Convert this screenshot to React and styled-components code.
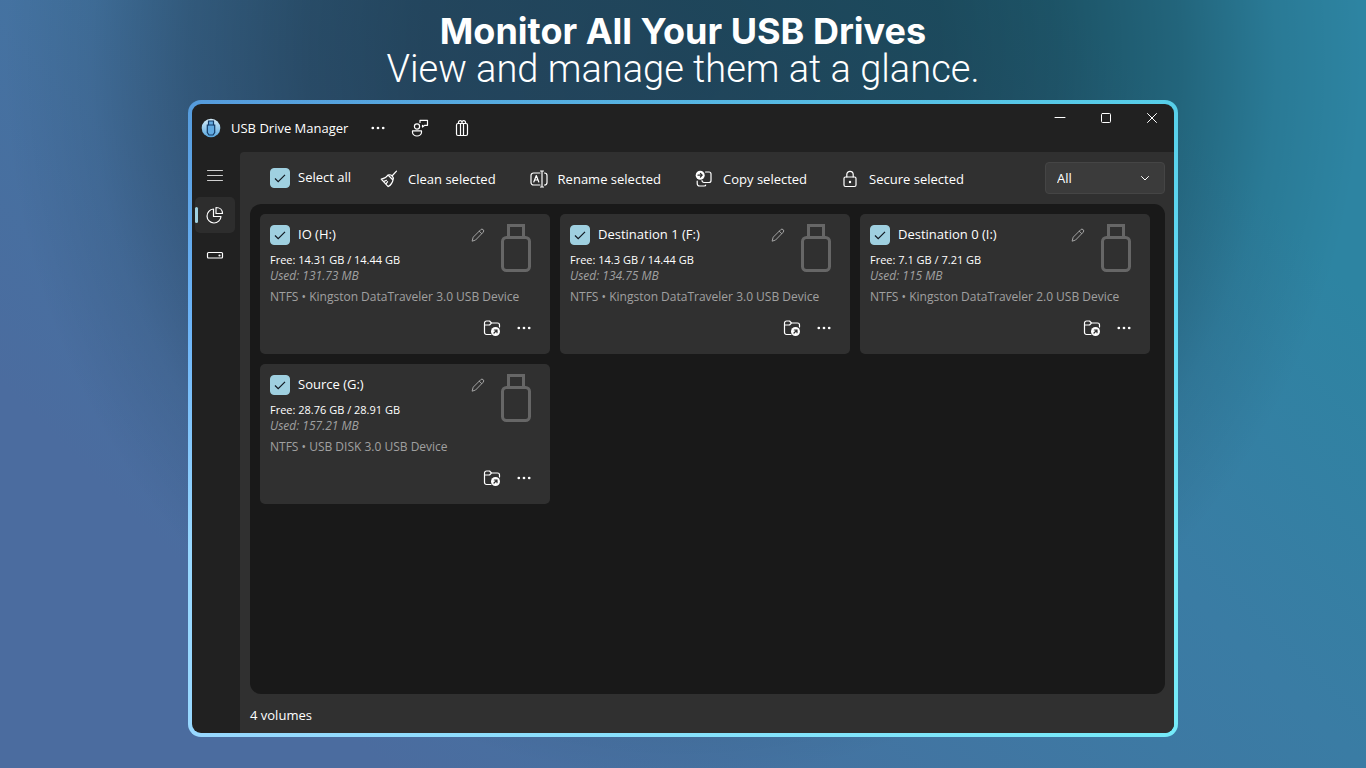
import React, { useState } from "react";
import styled, { createGlobalStyle } from "styled-components";

const Global = createGlobalStyle`
  *, *::before, *::after { box-sizing: border-box; }
  body { margin: 0; background: #4b6c9f; font-family: "Open Sans", "Noto Sans", sans-serif; font-size: 13px; color: #fff; }
  button, select, input { font: inherit; color: inherit; margin: 0; }
  h1, h2, p { margin: 0; font-weight: inherit; font-size: inherit; }
  svg { display: block; flex: none; }
`;

const Page = styled.div`
  min-height: 100vh;
  display: flex;
  flex-direction: column;
  padding: 0 188px 31px;
  background:
    radial-gradient(ellipse 680px 720px at 50% 60px, rgba(0, 0, 0, 0.45) 0%, rgba(0, 0, 0, 0.43) 38%, rgba(0, 0, 0, 0.37) 55%, rgba(0, 0, 0, 0.24) 73%, rgba(0, 0, 0, 0.08) 87%, rgba(0, 0, 0, 0) 100%),
    linear-gradient(45deg, #4b6c9f 18%, #3a7ca4 64%, #2d84a2 86%);
`;

const Hero = styled.header`
  height: 100px;
  padding-top: 12px;
  text-align: center;
  line-height: 38px;
`;
const HeroTitle = styled.h1`
  font-family: Inter, sans-serif;
  font-size: 36px;
  font-weight: 700;
`;
const HeroSub = styled.p`
  font-family: Roboto, sans-serif;
  font-size: 38px;
  font-weight: 300;
`;

const Frame = styled.main`
  flex: 1;
  display: flex;
  padding: 4px;
  border-radius: 13px;
  background:
    linear-gradient(90deg, rgba(80, 240, 240, 0), rgba(88, 250, 244, 0.55)),
    linear-gradient(180deg, #559bdc, #6cb4f8 35%, #98d8ff 70%);
`;
const Window = styled.div`
  flex: 1;
  display: flex;
  flex-direction: column;
  border-radius: 9px;
  overflow: hidden;
  background: #212121;
`;

const TitleBar = styled.div`
  height: 48px;
  display: flex;
  align-items: center;
  padding: 0 0 1px 9px;
`;
const AppName = styled.span`
  margin: 0 5px 0 10px;
  width: 126px;
  white-space: nowrap;
`;
const IconButton = styled.button`
  display: flex;
  align-items: center;
  justify-content: center;
  width: ${(p) => p.$w || 32}px;
  height: ${(p) => p.$h || 32}px;
  padding: 0;
  border: 0;
  background: none;
`;
const TitleTools = styled.div`
  display: flex;
  gap: 10px;
`;
const WindowButtons = styled.div`
  margin-left: auto;
  align-self: flex-start;
  display: flex;
`;

const Body = styled.div`
  flex: 1;
  display: flex;
`;
const Sidebar = styled.nav`
  width: 48px;
  display: flex;
  flex-direction: column;
  gap: 4px;
  padding: 5px 0 0 3px;
`;
const NavButton = styled.button`
  width: 40px;
  height: 36px;
  display: flex;
  align-items: center;
  padding: 0;
  border: 0;
  border-radius: 5px;
  background: ${(p) => (p.$active ? "#2d2d2d" : "none")};
  &::before {
    content: "";
    width: 3px;
    height: 16px;
    margin-right: 8px;
    border-radius: 2px;
    background: ${(p) => (p.$active ? "#9fd0e0" : "transparent")};
  }
`;

const Content = styled.section`
  flex: 1;
  display: flex;
  flex-direction: column;
  padding: 10px 9px 0 10px;
  border-top-left-radius: 4px;
  background: #303030;
`;
const Toolbar = styled.div`
  height: 42px;
  display: flex;
  align-items: flex-start;
  padding-left: 20px;
`;
const CheckLabel = styled.label`
  display: flex;
  align-items: center;
  gap: 8px;
  height: ${(p) => p.$h}px;
`;
const LabelText = styled.span`
  padding-bottom: 2px;
`;
const CheckBox = styled.input`
  appearance: none;
  width: 20px;
  height: 20px;
  flex: none;
  border-radius: 4px;
  border: 1px solid #9a9a9a;
  &:checked {
    border-color: #9fd0e0;
    background: #9fd0e0 url("data:image/svg+xml,%3Csvg xmlns='http://www.w3.org/2000/svg' viewBox='0 0 18 18'%3E%3Cpath d='M4 9.500l3.200 3.200 6.800-6.800' fill='none' stroke='%23101820' stroke-width='1.200'/%3E%3C/svg%3E") center / 18px no-repeat;
  }
`;
const Actions = styled.div`
  display: flex;
  gap: 34px;
  margin-left: 29px;
`;
const Action = styled.button`
  display: flex;
  align-items: center;
  gap: 10px;
  height: 34px;
  padding: 0;
  border: 0;
  background: none;
  white-space: nowrap;
`;
const FilterBox = styled.div`
  margin-left: auto;
  display: grid;
  align-items: center;
  width: 120px;
  height: 32px;
  border: 1px solid #454545;
  border-radius: 4px;
  background: #3b3b3b;
  > * { grid-area: 1 / 1; }
  > svg { justify-self: end; margin-right: 13px; pointer-events: none; }
`;
const Filter = styled.select`
  appearance: none;
  width: 100%;
  height: 30px;
  padding: 0 11px;
  border: 0;
  background: none;
`;

const Panel = styled.div`
  flex: 1;
  padding: 10px;
  border-radius: 11px;
  background: #191919;
`;
const CardGrid = styled.div`
  display: grid;
  grid-template-columns: repeat(auto-fill, 290px);
  gap: 10px;
`;
const Card = styled.article`
  height: 140px;
  display: flex;
  flex-direction: column;
  justify-content: space-between;
  padding: 10px 18px 10px 10px;
  border-radius: 5px;
  background: #303030;
`;
const CardTop = styled.div`
  display: flex;
`;
const CardInfo = styled.div`
  flex: 1;
  min-width: 0;
  white-space: nowrap;
`;
const CardHead = styled.div`
  display: flex;
  align-items: center;
  justify-content: space-between;
  height: 21px;
  padding-right: 15px;
  margin-bottom: 7px;
`;
const Line = styled.p`
  line-height: 16px;
`;
const FreeLine = styled(Line)`
  font-size: 11px;
  font-weight: 500;
`;
const MutedLine = styled(Line)`
  font-size: 12px;
  color: #a0a0a0;
  font-style: ${(p) => (p.$italic ? "italic" : "normal")};
  margin-top: ${(p) => (p.$spaced ? 5 : 0)}px;
`;
const CardActions = styled.div`
  display: flex;
  justify-content: flex-end;
  margin-right: -8px;
`;
const Status = styled.footer`
  height: 39px;
  line-height: 42px;
`;

const Icon = ({ size = 18, children, color = "#fff", width = 1.2, box = 18 }) => (
  <svg width={size} height={size} viewBox={`0 0 ${box} ${box}`} fill="none" stroke={color} strokeWidth={width} strokeLinecap="round" strokeLinejoin="round" aria-hidden="true">
    {children}
  </svg>
);
const Dots = () => (
  <Icon>
    <g fill="#fff" stroke="none"><circle cx="3.800" cy="9" r="1.350" /><circle cx="9" cy="9" r="1.350" /><circle cx="14.200" cy="9" r="1.350" /></g>
  </Icon>
);
const Logo = () => (
  <svg width="20" height="20" viewBox="0 0 20 20" aria-hidden="true">
    <defs><linearGradient id="logo" x1="0" y1="0" x2="0" y2="1"><stop offset="0" stopColor="#d5ecf8" /><stop offset="1" stopColor="#58a8e0" /></linearGradient></defs>
    <circle cx="10" cy="10" r="9.300" fill="url(#logo)" />
    <path d="M7.500 3h5v4h1.200v7.500l-1.700 2.500h-4l-1.700-2.500V7h1.200z" fill="#62abe2" stroke="#143b66" strokeWidth="1.200" />
    <path d="M7.500 7h5" stroke="#143b66" />
  </svg>
);
const People = () => (
  <Icon>
    <circle cx="6" cy="7.500" r="2.600" />
    <path d="M1.500 11.800h9v1.500c0 2-2 3.700-4.500 3.700s-4.500-1.700-4.500-3.700z" />
    <path d="M9 3.500V1.300h7.500v5h-2.800L11.500 8V6.300" />
  </Icon>
);
const Gift = () => (
  <Icon><rect x="3.500" y="4.500" width="11" height="12" rx="1.500" /><path d="M7.500 4.500v12M10.500 4.500v12M5.500 4.500V3a1.800 1.800 0 0 1 3.500 0v1.500M9 3a1.800 1.800 0 0 1 3.500 0v1.500" /></Icon>
);
const Broom = () => (
  <Icon><path d="M16.500 1.200l-4.500 4.800M8 5l5 5c.7-1.500.3-2.900-.8-4S9.500 4.500 8 5zM8 5C6.300 7.600 4 8.800 1.200 9.200l7 7.400c2.600-1.500 4.200-3.800 4.800-6.600M3.500 11.600l3-1.300M5.900 14.100l1.700-2.400" /></Icon>
);
const Rename = () => (
  <Icon><path d="M10 3H3.500a2.500 2.500 0 0 0-2.500 2.500v7A2.500 2.500 0 0 0 3.500 15H10M14.500 3a2.500 2.500 0 0 1 2.500 2.500v7a2.500 2.500 0 0 1-2.500 2.500M12 1v16M10.500 1h3M10.500 17h3M3.800 12l2.500-6.500L8.800 12M4.700 10h3.200" /></Icon>
);
const Copy = () => (
  <Icon>
    <path d="M10.500 2H14a2 2 0 0 1 2 2v6.500a2 2 0 0 1-2 2H9a2 2 0 0 1-2-2M2.200 11v2.500a2.500 2.500 0 0 0 2.500 2.500h4.500c1 0 1.500-.5 1.500-1" />
    <circle cx="5.200" cy="5.200" r="4.500" fill="#fff" stroke="none" /><path d="M3 5.200h4.200M5.400 3.400l1.800 1.800L5.400 7" stroke="#303030" />
  </Icon>
);
const Lock = () => (
  <Icon><rect x="3" y="7" width="12" height="9.500" rx="1.500" /><path d="M5.800 7V4.500a3.200 3.200 0 0 1 6.400 0V7" /><circle cx="9" cy="12" r=".6" fill="#fff" /></Icon>
);
const Menu = () => <Icon width={1} color="#d0d0d0"><path d="M1.500 4.500h15M1.500 9.500h15M1.500 14.500h15" /></Icon>;
const Pie = () => <Icon><path d="M7.500 3a7 7 0 1 0 7.500 7.500H7.500zM10 1.500v6h6.500c0-3.500-2.500-6-6.500-6z" /></Icon>;
const Drive = () => <Icon><rect x="1.500" y="6.500" width="15" height="5.500" rx="1" /><circle cx="13.500" cy="9.500" r=".5" fill="#fff" /></Icon>;
const Pencil = () => <Icon size={14} box={14} color="#a3a3a3" width={1}><path d="M1.200 12.800l1-3.600L9.700 1.700a1.700 1.700 0 0 1 2.500 2.500L4.800 11.800zM8.300 3.200l2.500 2.500" /></Icon>;
const Folder = () => (
  <Icon>
    <path d="M8 15.500H3.500a2 2 0 0 1-2-2V4a2 2 0 0 1 2-2h3l2 2H14.500a2 2 0 0 1 2 2V8M2 6h4.500l2-2" />
    <circle cx="12.500" cy="12.500" r="4.500" fill="#fff" stroke="none" /><path d="M11 14l3-3M11.300 11H14v2.700" stroke="#2f2f2f" />
  </Icon>
);
const UsbStick = () => (
  <svg width="32" height="50" viewBox="0 0 32 50" fill="none" stroke="#666" strokeWidth="3" aria-hidden="true">
    <path d="M8.500 13V1.500h15V13" /><rect x="2.500" y="13.500" width="27" height="33" rx="4" />
  </svg>
);

const drives = [
  { name: "IO (H:)", free: "14.31 GB / 14.44 GB", used: "131.73 MB", device: "NTFS • Kingston DataTraveler 3.0 USB Device" },
  { name: "Destination 1 (F:)", free: "14.3 GB / 14.44 GB", used: "134.75 MB", device: "NTFS • Kingston DataTraveler 3.0 USB Device" },
  { name: "Destination 0 (I:)", free: "7.1 GB / 7.21 GB", used: "115 MB", device: "NTFS • Kingston DataTraveler 2.0 USB Device" },
  { name: "Source (G:)", free: "28.76 GB / 28.91 GB", used: "157.21 MB", device: "NTFS • USB DISK 3.0 USB Device" },
];

const actions = [
  ["Clean selected", Broom],
  ["Rename selected", Rename],
  ["Copy selected", Copy],
  ["Secure selected", Lock],
];

function DriveCard({ drive, checked, onToggle }) {
  return (
    <Card>
      <CardTop>
        <CardInfo>
          <CardHead>
            <CheckLabel $h={21}>
              <CheckBox type="checkbox" checked={checked} onChange={onToggle} />
              <LabelText>{drive.name}</LabelText>
            </CheckLabel>
            <IconButton $w={14} $h={14} aria-label="Rename"><Pencil /></IconButton>
          </CardHead>
          <FreeLine>Free: {drive.free}</FreeLine>
          <MutedLine $italic>Used: {drive.used}</MutedLine>
          <MutedLine $spaced>{drive.device}</MutedLine>
        </CardInfo>
        <UsbStick />
      </CardTop>
      <CardActions>
        <IconButton aria-label="Open folder"><Folder /></IconButton>
        <IconButton aria-label="More"><Dots /></IconButton>
      </CardActions>
    </Card>
  );
}

export default function App() {
  const [selected, setSelected] = useState(drives.map(() => true));
  const all = selected.every(Boolean);
  return (
    <>
      <Global />
      <Page>
        <Hero>
          <HeroTitle>Monitor All Your USB Drives</HeroTitle>
          <HeroSub>View and manage them at a glance.</HeroSub>
        </Hero>
        <Frame>
          <Window>
            <TitleBar>
              <Logo />
              <AppName>USB Drive Manager</AppName>
              <TitleTools>
                <IconButton aria-label="More"><Dots /></IconButton>
                <IconButton aria-label="Feedback"><People /></IconButton>
                <IconButton aria-label="Gift"><Gift /></IconButton>
              </TitleTools>
              <WindowButtons>
                <IconButton $w={46} $h={28} aria-label="Minimize"><Icon size={12} box={12} width={1}><path d="M1 5.500h10" /></Icon></IconButton>
                <IconButton $w={46} $h={28} aria-label="Maximize"><Icon size={12} box={12} width={1}><rect x="1.500" y="1.500" width="9" height="9" rx="1" /></Icon></IconButton>
                <IconButton $w={45} $h={28} aria-label="Close"><Icon size={12} box={12} width={1}><path d="M1.500 1.500l9 9M10.500 1.500l-9 9" /></Icon></IconButton>
              </WindowButtons>
            </TitleBar>
            <Body>
              <Sidebar>
                <NavButton aria-label="Menu"><Menu /></NavButton>
                <NavButton $active aria-label="Volumes"><Pie /></NavButton>
                <NavButton aria-label="Drives"><Drive /></NavButton>
              </Sidebar>
              <Content>
                <Toolbar>
                  <CheckLabel $h={32}>
                    <CheckBox type="checkbox" checked={all} onChange={() => setSelected(drives.map(() => !all))} />
                    <LabelText>Select all</LabelText>
                  </CheckLabel>
                  <Actions>
                    {actions.map(([label, Glyph]) => <Action key={label}><Glyph />{label}</Action>)}
                  </Actions>
                  <FilterBox>
                    <Filter aria-label="Filter" defaultValue="All"><option>All</option></Filter>
                    <Icon size={12} box={12} width={1}><path d="M2.500 4.500L6 8l3.500-3.500" /></Icon>
                  </FilterBox>
                </Toolbar>
                <Panel>
                  <CardGrid>
                    {drives.map((d, i) => (
                      <DriveCard key={d.name} drive={d} checked={selected[i]} onToggle={() => setSelected(selected.map((s, j) => (j === i ? !s : s)))} />
                    ))}
                  </CardGrid>
                </Panel>
                <Status>4 volumes</Status>
              </Content>
            </Body>
          </Window>
        </Frame>
      </Page>
    </>
  );
}
